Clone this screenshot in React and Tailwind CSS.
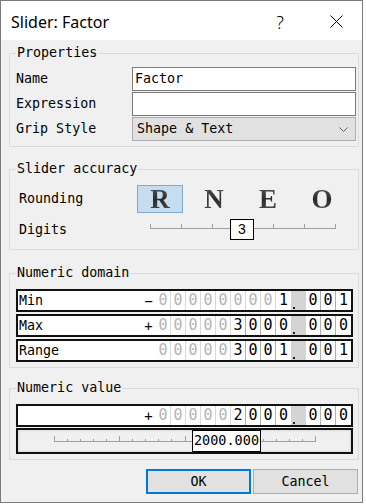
import React from "react"

const mono = "font-['DejaVu_Sans_Mono',monospace]"

const Group = ({ title, className = "", children }) => (
  <fieldset className={`border border-[#dcdcdc] w-full ${className}`}>
    <legend className="ml-[6px] px-[1px] text-[13.33px] leading-[16px] text-black">{title}</legend>
    {children}
  </fieldset>
)

const DigitRow = ({ label, sign, digits, frac }) => {
  const chars = digits.split("")
  const firstSig = chars.findIndex((d) => d !== "0")
  return (
    <div className="flex h-[23px] w-[337px] border-2 border-[#111] bg-white">
      <div className="flex-1 pl-[1px] flex items-center text-[13.33px] leading-none">{label}</div>
      <div className="w-[15px] flex items-center justify-center text-[14px] leading-none">{sign}</div>
      {chars.map((d, i) => {
        const sig = i >= firstSig
        return (
          <div
            key={i}
            className={`w-[15px] flex items-center justify-center text-[15px] leading-none ${sig ? "text-black" : "text-[#b4b4b4]"} ${i < 8 ? (sig ? "border-r border-[#b0b0b0]" : "border-r border-[#d8d8d8]") : ""}`}
          >
            {d}
          </div>
        )
      })}
      <div className="relative w-[15px] bg-[#d4d4d4]">
        <div className="absolute left-[2px] bottom-[1px] w-[2px] h-[2px] bg-[#222]" />
      </div>
      {frac.split("").map((d, i) => (
        <div
          key={i}
          className={`w-[15px] flex items-center justify-center text-[15px] leading-none ${i < 2 ? "border-r border-[#b0b0b0]" : ""}`}
        >
          {d}
        </div>
      ))}
    </div>
  )
}

const App = () => {
  const ticks = Array.from({ length: 21 }, (_, i) => 36 + i * 13.05)

  return (
    <div className="w-[366px] h-[504px] bg-white">
      <div className={`w-[363px] h-[503px] border border-[#7a7a7a] bg-[#f0f0f0] flex flex-col ${mono}`}>
        {/* title bar */}
        <div className="h-[39px] pt-[3px] bg-white flex items-center font-['Noto_Sans',sans-serif]">
          <div className="flex-1 pl-[10px] text-[16px] text-black">Slider: Factor</div>
          <div className="text-[18px] font-light text-black mr-[46px]">?</div>
          <svg width="13" height="13" viewBox="0 0 13 13" className="mr-[19px] -mt-[2px]">
            <path d="M0.5 0.5 L12.5 12.5 M12.5 0.5 L0.5 12.5" stroke="#000" strokeWidth="1" fill="none" />
          </svg>
        </div>

        <div className="flex-1 pl-[8px] pr-[3px] pt-[5px] flex flex-col">
          {/* Properties */}
          <Group title="Properties">
            <div className="pt-[6px] pb-[5px] pl-[6px] pr-[2px] grid grid-cols-[116px_1fr] gap-y-[1px] text-[13.33px]">
              <div className="h-[24px] flex items-center">Name</div>
              <div className="h-[24px] border border-[#7a7a7a] bg-white flex items-center pl-[2px]">Factor</div>
              <div className="h-[24px] flex items-center">Expression</div>
              <div className="h-[24px] border border-[#7a7a7a] bg-white" />
              <div className="h-[24px] flex items-center">Grip Style</div>
              <div className="h-[24px] border border-[#adadad] bg-[#e1e1e1] flex items-center pl-[4px] pr-[7px]">
                <span className="flex-1">Shape &amp; Text</span>
                <svg width="9" height="5" viewBox="0 0 9 5">
                  <path d="M0.5 0.5 L4.5 4.5 L8.5 0.5" stroke="#606060" strokeWidth="1" fill="none" />
                </svg>
              </div>
            </div>
          </Group>

          {/* Slider accuracy */}
          <Group title="Slider accuracy" className="mt-[14px]">
            <div className="pt-[8px] pb-[9px] pl-[9px] grid grid-cols-[118px_1fr] text-[13.33px]">
              <div className="h-[28px] flex items-center">Rounding</div>
              <div className="flex gap-[8px]">
                {["R", "N", "E", "O"].map((l, i) => (
                  <div
                    key={l}
                    className={`w-[46px] h-[28px] flex items-center justify-center border ${i === 0 ? "bg-[#c5dcf1] border-[#82a9c9]" : "border-transparent"}`}
                  >
                    <span className="font-['Liberation_Serif',serif] font-bold text-[27px] leading-none bg-linear-to-b from-[#5a5a5a] via-[#2a2a2a] to-[#555] bg-clip-text text-transparent">
                      {l}
                    </span>
                  </div>
                ))}
              </div>
              <div className="h-[21px] mt-[6px] flex items-center">Digits</div>
              <div className="relative h-[21px] mt-[6px]">
                <svg width="200" height="21" className="absolute left-0 top-0">
                  <path d="M13 9.5 H198" stroke="#a0a0a0" strokeWidth="1.2" />
                  {[13, 44, 75, 106, 136, 167, 198].map((x) => (
                    <path key={x} d={`M${x + 0.5} 5 V10`} stroke="#a0a0a0" strokeWidth="1" />
                  ))}
                </svg>
                <div className="absolute left-[93px] top-0 w-[24px] h-[21px] border border-black bg-white flex items-center justify-center text-[14px] font-['Liberation_Sans',sans-serif]">
                  3
                </div>
              </div>
            </div>
          </Group>

          {/* Numeric domain */}
          <Group title="Numeric domain" className="mt-[15px]">
            <div className="pt-[8px] pb-[5px] pl-[6px] flex flex-col gap-[2px]">
              <DigitRow label="Min" sign="−" digits="000000001" frac="001" />
              <DigitRow label="Max" sign="+" digits="000003000" frac="000" />
              <DigitRow label="Range" sign="" digits="000003001" frac="001" />
            </div>
          </Group>

          {/* Numeric value */}
          <Group title="Numeric value" className="mt-[12px]">
            <div className="pt-[8px] pb-[5px] pl-[6px] flex flex-col gap-[1px]">
              <DigitRow label="" sign="+" digits="000002000" frac="000" />
              <div className="relative h-[26px] w-[337px] border-2 border-[#111] bg-[#f0f0f0] shadow-[inset_0_0_3px_rgba(0,0,0,0.18)]">
                <svg width="333" height="22" className="absolute left-0 top-0">
                  <path d="M36 11.5 H297" stroke="#a0a0a0" strokeWidth="1.2" />
                  {ticks.map((x, i) => (
                    <path
                      key={i}
                      d={`M${Math.round(x) + 0.5} ${i % 5 === 0 ? 6 : 9} V12`}
                      stroke="#a0a0a0"
                      strokeWidth="1"
                    />
                  ))}
                </svg>
                <div className="absolute left-[174px] top-0 w-[69px] h-[22px] border border-black bg-white flex items-center justify-center text-[13.5px] leading-none">
                  2000.000
                </div>
              </div>
            </div>
          </Group>

          {/* buttons */}
          <div className="mt-[9px] mr-[1px] flex justify-end gap-[2px] text-[13.33px]">
            <button className="w-[105px] h-[25px] border-2 border-[#0078d7] bg-[#e1e1e1] flex items-center justify-center">
              OK
            </button>
            <button className="w-[105px] h-[25px] border border-[#adadad] bg-[#e1e1e1] flex items-center justify-center">
              Cancel
            </button>
          </div>
        </div>
      </div>
    </div>
  )
}

export default App
